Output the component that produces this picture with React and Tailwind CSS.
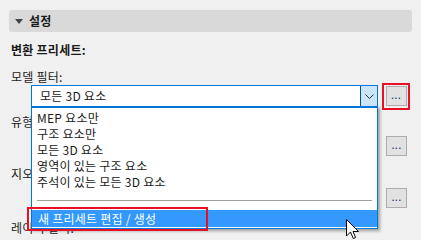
export default function App() {
  const items = ["MEP 요소만", "구조 요소만", "모든 3D 요소", "영역이 있는 구조 요소", "주석이 있는 모든 3D 요소"];
  const font = { fontFamily: '"Noto Sans CJK KR", "Noto Sans", sans-serif' };

  const Dots = () => (
    <div className="w-[21px] h-[20px] bg-[#e1e1e1] border border-[#adadad] flex items-center justify-center">
      <span className="text-[11px] leading-none text-[#0b3a6e] -mt-[3px]">...</span>
    </div>
  );

  return (
    <div className="relative w-[421px] h-[240px] overflow-hidden bg-[#f0f0f0] text-[12px] tracking-[0.25px] text-[#1a1a1a]" style={font}>
      {/* section header */}
      <div className="mx-[9px] mt-[10px] h-[22px] rounded-[3px] bg-[#d9d9d9] flex items-center pl-[6px] gap-[6px]">
        <svg width="8" height="5" viewBox="0 0 8 5"><path d="M0 0h8L4 5z" fill="#444" /></svg>
        <span className="font-bold leading-none">설정</span>
      </div>

      <div className="pl-[11px] pr-[11px]">
        <div className="mt-[10px] h-[16px] leading-[16px] font-bold">변환 프리세트:</div>

        <div className="mt-[11px] h-[16px] leading-[16px]">모델 필터:</div>
        <div className="mt-[0px] flex items-center h-[22px]">
          <div className="ml-[20px] w-[347px] h-[22px] bg-white border border-[#0078d7] flex">
            <div className="flex-1 pl-[8px] leading-[20px]">모든 3D 요소</div>
            <div className="w-[17px] h-full bg-[#cce4f7] border-l border-[#005499] flex items-center justify-center">
              <svg width="9" height="5" viewBox="0 0 9 5"><path d="M0.5 0.5L4.5 4.5L8.5 0.5" stroke="#333" fill="none" strokeWidth="1" /></svg>
            </div>
          </div>
          <div className="ml-[4px] w-[28px] h-[27px] border-2 border-[#e81123] flex items-center justify-center">
            <Dots />
          </div>
        </div>

        <div className="mt-[7px] h-[16px] leading-[16px]">유형 필터:</div>
        <div className="mt-[6px] flex justify-end pr-[3px]"><Dots /></div>

        <div className="mt-[10px] h-[16px] leading-[16px]">지오메트리:</div>
        <div className="mt-[6px] flex justify-end pr-[3px]"><Dots /></div>

        <div className="mt-[12px] h-[16px] leading-[16px]">레이어 필터:</div>
      </div>

      {/* open dropdown list */}
      <div className="absolute left-[31px] top-[106px] w-[347px] h-[123px] bg-white border border-[#0078d7] border-t-2 shadow-[2px_2px_3px_rgba(0,0,0,0.35)]">
        <div className="pt-[2px]">
          {items.map((t) => (
            <div key={t} className="h-[16px] leading-[16px] pl-[5px]">{t}</div>
          ))}
        </div>
        <div className="mt-[10px] mx-[5px] h-px bg-[#a0a0a0]" />
        <div className="mt-[9px] h-[17px] leading-[17px] bg-[#3399ff] text-white pl-[6px]">새 프리세트 편집 / 생성</div>
      </div>

      {/* red highlight */}
      <div className="absolute left-[27px] top-[207px] w-[181px] h-[24px] border-2 border-[#e81123]" />

      {/* cursor */}
      <svg className="absolute left-[346px] top-[219px]" width="13" height="21" viewBox="0 0 13 21">
        <path d="M0.5 0.5V17L4.5 13L7.3 19.5L9.6 18.5L7 12.5H12.5Z" fill="white" stroke="black" strokeWidth="1" strokeLinejoin="round" />
      </svg>
    </div>
  );
}
